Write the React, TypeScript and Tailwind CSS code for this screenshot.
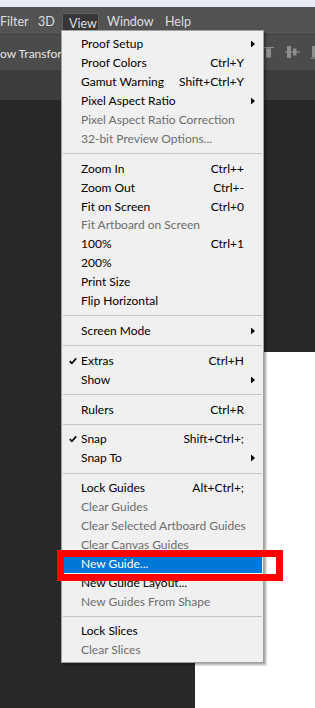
import React from "react";

type Item =
  | { sep: true }
  | {
      sep?: false;
      label: string;
      shortcut?: string;
      sub?: boolean;
      disabled?: boolean;
      checked?: boolean;
      active?: boolean;
    };

const items: Item[] = [
  { label: "Proof Setup", sub: true },
  { label: "Proof Colors", shortcut: "Ctrl+Y" },
  { label: "Gamut Warning", shortcut: "Shift+Ctrl+Y" },
  { label: "Pixel Aspect Ratio", sub: true },
  { label: "Pixel Aspect Ratio Correction", disabled: true },
  { label: "32-bit Preview Options...", disabled: true },
  { sep: true },
  { label: "Zoom In", shortcut: "Ctrl++" },
  { label: "Zoom Out", shortcut: "Ctrl+-" },
  { label: "Fit on Screen", shortcut: "Ctrl+0" },
  { label: "Fit Artboard on Screen", disabled: true },
  { label: "100%", shortcut: "Ctrl+1" },
  { label: "200%" },
  { label: "Print Size" },
  { label: "Flip Horizontal" },
  { sep: true },
  { label: "Screen Mode", sub: true },
  { sep: true },
  { label: "Extras", shortcut: "Ctrl+H", checked: true },
  { label: "Show", sub: true },
  { sep: true },
  { label: "Rulers", shortcut: "Ctrl+R" },
  { sep: true },
  { label: "Snap", shortcut: "Shift+Ctrl+;", checked: true },
  { label: "Snap To", sub: true },
  { sep: true },
  { label: "Lock Guides", shortcut: "Alt+Ctrl+;" },
  { label: "Clear Guides", disabled: true },
  { label: "Clear Selected Artboard Guides", disabled: true },
  { label: "Clear Canvas Guides", disabled: true },
  { label: "New Guide...", active: true },
  { label: "New Guide Layout..." },
  { label: "New Guides From Shape", disabled: true },
  { sep: true },
  { label: "Lock Slices" },
  { label: "Clear Slices", disabled: true },
];

function Arrow({ color }: { color: string }) {
  return (
    <svg width="4" height="7" viewBox="0 0 4 7" className="absolute right-[7px] top-1/2 -translate-y-1/2">
      <polygon points="0,0 4,3.5 0,7" fill={color} />
    </svg>
  );
}

function Check() {
  return (
    <svg width="8" height="7" viewBox="0 0 8 7" className="absolute left-[6px] top-1/2 -translate-y-1/2">
      <polyline points="0.8,3.6 2.9,5.8 7.2,0.9" fill="none" stroke="#000" strokeWidth="1.7" />
    </svg>
  );
}

function MenuRow({ item }: { item: Item }) {
  if (item.sep) {
    return (
      <div className="h-[11px] flex items-center px-[1px]">
        <div className="h-px w-full bg-[#c6c6c6]" />
      </div>
    );
  }
  const color = item.active ? "text-white" : item.disabled ? "text-[#6d6d6d]" : "text-black";
  return (
    <div
      className={`relative h-[18.9px] mx-[1px] flex items-center ${item.active ? "bg-[#0078d7]" : ""} ${color}`}
    >
      {item.checked && <Check />}
      <span className="pl-[18px] leading-none whitespace-nowrap">{item.label}</span>
      {item.shortcut && (
        <span className="ml-auto pr-[18px] leading-none whitespace-nowrap">{item.shortcut}</span>
      )}
      {item.sub && <Arrow color={item.active ? "#fff" : "#000"} />}
    </div>
  );
}

export default function App() {
  return (
    <div
      className="relative w-[315px] h-[708px] overflow-hidden bg-[#282828] flex flex-col"
      style={{ fontFamily: 'Lato, "Noto Sans", sans-serif' }}
    >
      <div className="h-[7px] bg-[#e8ebf1] shrink-0" />
      <div className="h-[27px] bg-[#535353] shrink-0 flex items-stretch text-[12.5px] text-[#dedede]">
        <div className="w-[31px] flex items-center pt-[3px]">Filter</div>
        <div className="w-[31px] flex items-center pl-[7px] pt-[3px]">3D</div>
        <div className="w-[37px] mt-[6px] flex items-center pl-[6px] bg-[#363636] border border-b-0 border-[#5e5e5e] rounded-t-[2px]">
          View
        </div>
        <div className="w-[59px] flex items-center pl-[8px] pt-[3px]">Window</div>
        <div className="w-[42px] flex items-center pl-[7px] pt-[3px]">Help</div>
      </div>
      <div className="h-[36px] bg-[#4b4b4b] border-t border-[#404040] shrink-0 flex items-center overflow-hidden">
        <div className="w-[262px] shrink-0 text-[12px] text-[#e4e4e4] whitespace-nowrap pt-[2px]">
          ow Transform
        </div>
        <svg width="12" height="12" viewBox="0 0 12 12" className="shrink-0">
          <rect x="0" y="0" width="12" height="1.2" fill="#8e8e8e" />
          <rect x="4" y="1.5" width="5" height="9" fill="#8e8e8e" />
        </svg>
        <svg width="15" height="13" viewBox="0 0 15 13" className="shrink-0 ml-[11px]">
          <rect x="2" y="0" width="4" height="12" fill="#8e8e8e" />
          <rect x="8" y="2.5" width="3.5" height="7" fill="#8e8e8e" />
          <rect x="0" y="5.5" width="15" height="1.2" fill="#8e8e8e" />
        </svg>
        <svg width="12" height="13" viewBox="0 0 12 13" className="shrink-0 ml-[11px]">
          <rect x="1" y="0" width="4" height="11" fill="#8e8e8e" />
          <rect x="0" y="11.5" width="12" height="1.2" fill="#8e8e8e" />
        </svg>
      </div>
      <div className="h-[30px] bg-[#3c3c3c] shrink-0" />
      <div className="flex-1 flex">
        <div className="w-[195px] shrink-0 bg-[#282828]" />
        <div className="flex-1 flex flex-col">
          <div className="h-[252px] bg-[#282828]" />
          <div className="flex-1 bg-white" />
        </div>
      </div>

      <div className="absolute left-[61px] top-[30px] w-[203px] bg-[#f0f0f0] border border-[#a0a0a0] pt-[4px] pb-[2px] text-[12px] shadow-[2px_2px_2px_rgba(0,0,0,0.35)]">
        {items.map((it, i) => (
          <MenuRow key={i} item={it} />
        ))}
      </div>

      <div className="absolute left-[57px] top-[550px] w-[226px] h-[31px] border-[7px] border-[#ff0000]" />
    </div>
  );
}
